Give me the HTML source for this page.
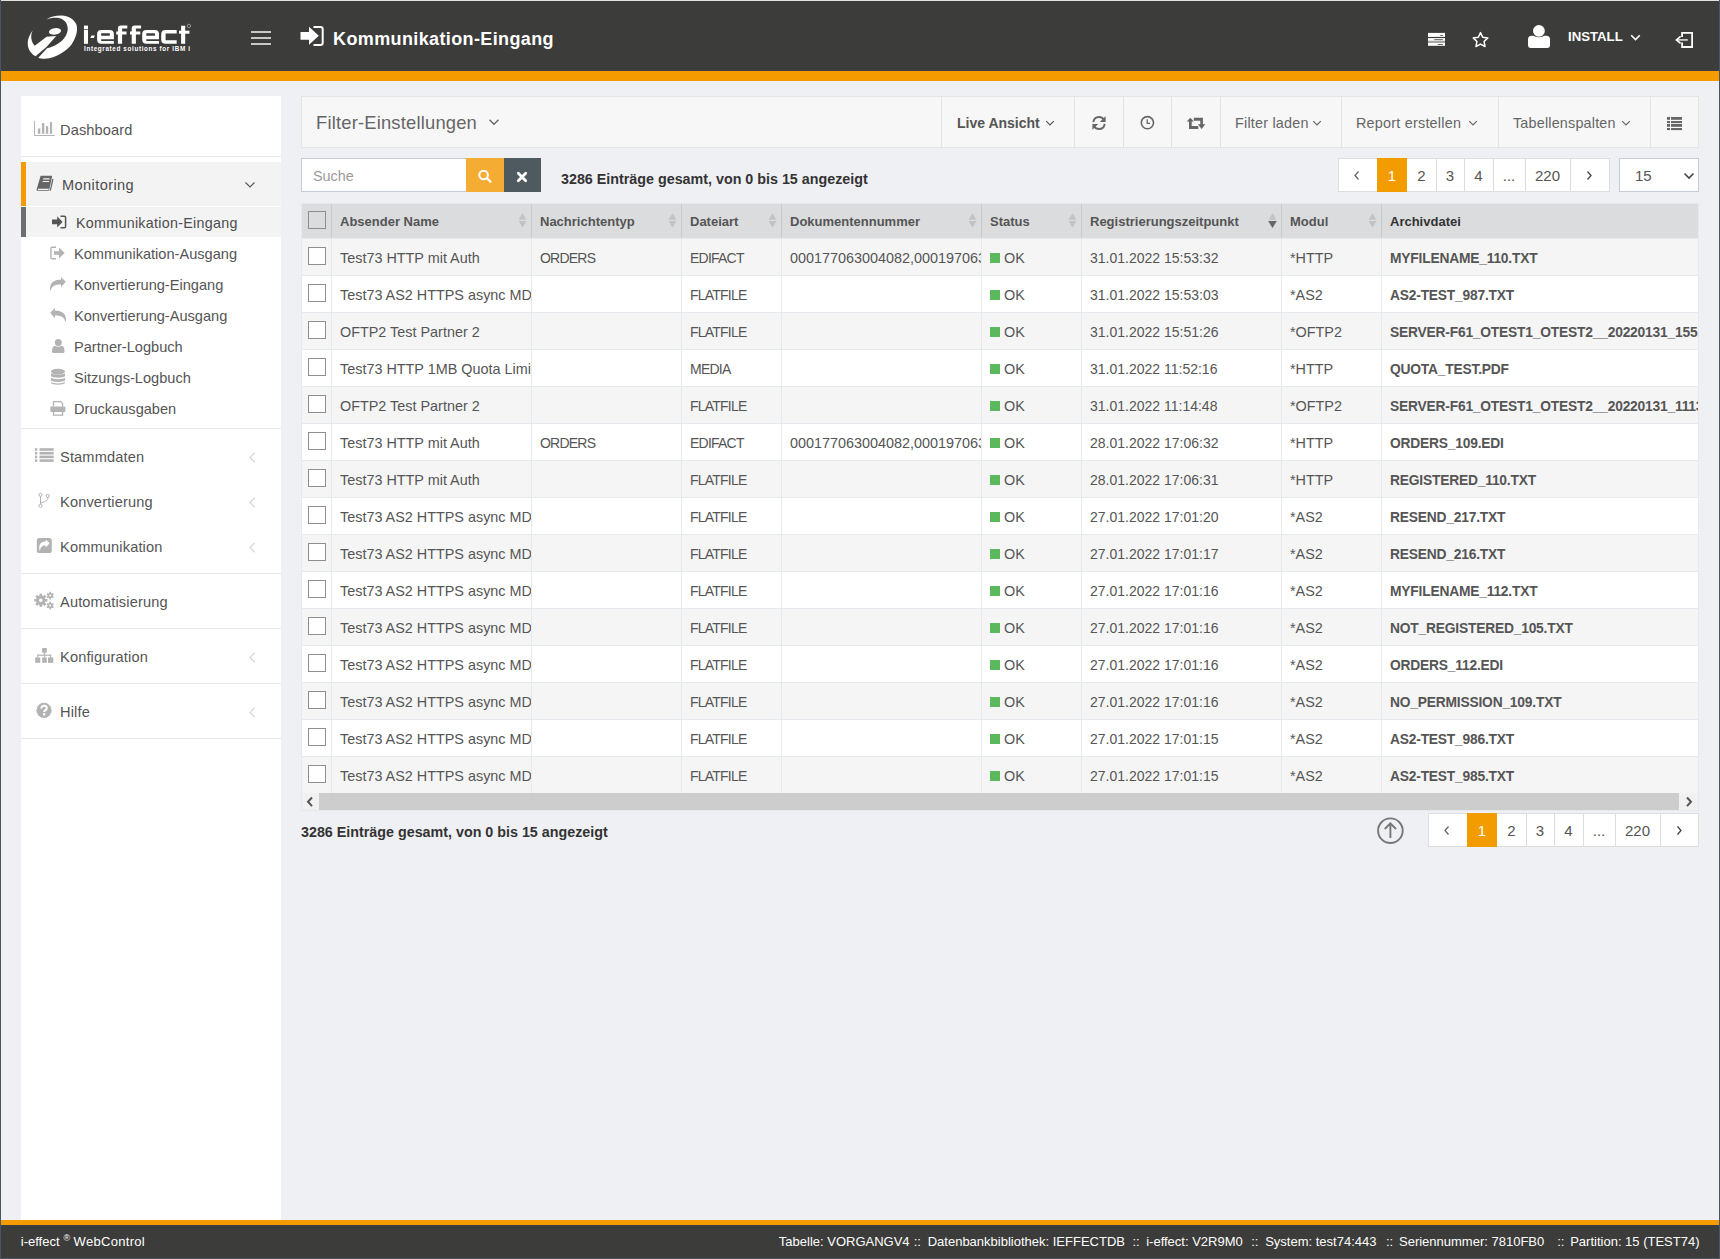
<!DOCTYPE html>
<html><head><meta charset="utf-8">
<style>
*{box-sizing:border-box;margin:0;padding:0}
html,body{width:1720px;height:1259px;overflow:hidden}
body{position:relative;background:#eff0f4;font-family:"Liberation Sans",sans-serif;color:#555;font-size:14px}
.abs{position:absolute}
.sl{line-height:18px;white-space:nowrap;color:#555}
.cb{width:18px;height:18px;border:1px solid #8e8e8e}
.th{font-weight:700;font-size:13px;line-height:18px;white-space:nowrap}
.td{font-size:14.4px;line-height:18px;white-space:nowrap;overflow:hidden;color:#555}
.td.b{font-weight:700;font-size:13.8px;letter-spacing:-0.2px;padding-top:0.8px}
.td.up{font-size:14px;letter-spacing:-0.78px;padding-top:0.3px}
.td.dt{font-size:14px}
.pg{font-size:15px;line-height:18px;text-align:center;white-space:nowrap}
.ft{top:1233px;font-size:13px;line-height:18px;color:#fff;white-space:nowrap}
#frameT{left:0;top:0;width:1720px;height:1px;background:#e2e2e2}
#frameL{left:0;top:0;width:1px;height:1259px;background:#4a5564}
#frameR{left:1719px;top:0;width:1px;height:1259px;background:#4a5564}
#frameB{left:0;top:1258px;width:1720px;height:1px;background:#4a5564}
#hdr{left:1px;top:1px;width:1718px;height:70px;background:#3c3c3b}
#hbar{left:1px;top:71px;width:1718px;height:10px;background:#f49b00}
#side{left:21px;top:96px;width:260px;height:1124px;background:#fff}
#fbar{left:1px;top:1220px;width:1718px;height:5px;background:#f49b00}
#foot{left:1px;top:1225px;width:1718px;height:33px;background:#3c3c3b;color:#fff;font-size:13px}
</style></head><body>
<div class="abs" id="hdr"></div>
<div class="abs" id="hbar"></div>
<svg class="abs" style="left:24px;top:12px" width="60" height="50" viewBox="0 0 60 50">
<path fill="#fff" d="M22.2,7.5 C26,5 31,3.7 37.7,3.6 C44,3.8 50,7 52.6,13 C54,19 52,26 47.5,32.5 C43,38.5 35,43.5 26.5,46 C22,47 17,46.8 14.3,45.7 L23,36.3 C28,35 33,33 37,29.5 C41,26 43.6,21.5 43.7,17 C43.8,12 41,8 36,6.3 C31.5,5.2 26.5,6 22.2,7.5 Z"/>
<path fill="#fff" d="M12.7,14.1 C8.5,18 5,23.5 3.9,29 C3.2,34.5 4.5,40 11.5,44.3 L22.2,35.3 L32.2,24 L22.6,24.8 L10.7,33.8 C8,31 6.8,27 7.3,22.8 C7.8,19.5 9.7,16.5 12.7,14.1 Z"/>
<ellipse cx="31" cy="19.4" rx="6.1" ry="3.2" transform="rotate(-9 31 19.4)" fill="#fff"/>
</svg>
<svg class="abs" style="left:80px;top:20px" width="115" height="26" viewBox="0 0 115 26"><g fill="#fff"><rect x="3.95" y="5.6" width="4.05" height="3.7"/><rect x="3.95" y="10" width="4.05" height="13.8"/><path d="M10.3,18 L11.5,15.4 H14.9 L13.7,18 Z"/><path fill-rule="evenodd" d="M21.3,9.9 H29.7 Q33.9,9.9 33.9,14.1 V19.3 H21.2 V21.1 H33.9 V23.8 H21.3 Q17.1,23.8 17.1,19.6 V14.1 Q17.1,9.9 21.3,9.9 Z M21.2,13.3 H29.8 V15.7 H21.2 Z"/><path d="M37.9,23.8 V8.6 Q37.9,5.6 40.9,5.6 H47.3 V8.6 H42.1 V11.6 H46.5 V14.4 H42.1 V23.8 Z M36.2,11.6 H37.95 V14.4 H36.2 Z"/><path d="M51.7,23.8 V8.6 Q51.7,5.6 54.7,5.6 H61.099999999999994 V8.6 H55.900000000000006 V11.6 H60.3 V14.4 H55.900000000000006 V23.8 Z M50.0,11.6 H51.75 V14.4 H50.0 Z"/><path fill-rule="evenodd" d="M66.4,9.9 H74.8 Q79.0,9.9 79.0,14.1 V19.3 H66.3 V21.1 H79.0 V23.8 H66.4 Q62.2,23.8 62.2,19.6 V14.1 Q62.2,9.9 66.4,9.9 Z M66.3,13.3 H74.9 V15.7 H66.3 Z"/><path d="M85.6,9.9 H96.7 V13.4 H85.6 V20.3 H96.7 V23.8 H85.6 Q81.2,23.8 81.2,19.4 V14.3 Q81.2,9.9 85.6,9.9 Z"/><rect x="101.1" y="5.7" width="4.1" height="18.1"/><rect x="99" y="10.7" width="10.4" height="3"/></g><circle cx="108.9" cy="5.9" r="1.7" fill="none" stroke="#bbb" stroke-width="0.7"/></svg>

<div class="abs" style="left:84px;top:45px;font-weight:700;font-size:6.3px;line-height:7px;letter-spacing:0.65px;color:#fff;white-space:nowrap">Integrated solutions for IBM i</div>
<div class="abs" style="left:251px;top:31px;width:20px;height:2px;background:#c8c8c8"></div>
<div class="abs" style="left:251px;top:37px;width:20px;height:2px;background:#c8c8c8"></div>
<div class="abs" style="left:251px;top:43px;width:20px;height:2px;background:#c8c8c8"></div>
<svg class="abs" style="left:300px;top:25px" width="26" height="22" viewBox="0 0 26 22">
<path fill="#fff" d="M0.5,7 H9 V1.8 L18.8,10.8 L9,19.8 V14.7 H0.5 Z"/>
<path fill="none" stroke="#fff" stroke-width="2" d="M13.5,2 H20.5 Q22.7,2 22.7,4.2 V17.8 Q22.7,20 20.5,20 H13.5"/>
</svg>
<div class="abs" style="left:333px;top:27px;font-weight:700;font-size:18px;line-height:24px;letter-spacing:0.38px;color:#fff;white-space:nowrap">Kommunikation-Eingang</div>
<svg class="abs" style="left:1427px;top:32px" width="20" height="16" viewBox="0 0 20 16">
<rect x="1" y="0.9" width="17" height="4" fill="#fff"/>
<rect x="1" y="6.1" width="17" height="2.8" fill="#fff"/>
<rect x="1" y="8.9" width="17" height="2" fill="#a6a6a6"/>
<rect x="1" y="10.9" width="17" height="2.9" fill="#fff"/>
<g fill="#555"><rect x="13.3" y="3" width="2.6" height="0.9"/><rect x="7.3" y="7.2" width="8.6" height="0.9"/><rect x="10.8" y="12.1" width="5.1" height="0.9"/></g>
</svg>
<svg class="abs" style="left:1471px;top:30px" width="19" height="20" viewBox="0 0 19 20"><path fill="none" stroke="#fff" stroke-width="1.5" stroke-linejoin="round" d="M9.50,2.60 L11.70,7.27 L16.82,7.92 L13.07,11.46 L14.03,16.53 L9.50,14.05 L4.97,16.53 L5.93,11.46 L2.18,7.92 L7.30,7.27 Z"/></svg>
<svg class="abs" style="left:1527px;top:24px" width="25" height="26" viewBox="0 0 25 26">
<circle cx="11.9" cy="6.9" r="5.9" fill="#fff"/>
<path fill="#fff" d="M1,15.4 Q1,11.7 4.7,11.7 H6.6 C8.5,13.6 15.3,13.6 17.2,11.7 H19.3 Q23,11.7 23,15.4 V21.6 Q23,24 20.6,24 H3.4 Q1,24 1,21.6 Z"/>
</svg>
<div class="abs" style="left:1568px;top:28px;font-weight:700;font-size:13.2px;line-height:18px;color:#fff;white-space:nowrap">INSTALL</div>
<svg class="abs" style="left:1629px;top:33px" width="13" height="9" viewBox="0 0 13 9">
<path fill="none" stroke="#fff" stroke-width="1.6" d="M2.2,2.2 L6.5,6.6 L10.8,2.2"/>
</svg>
<svg class="abs" style="left:1674px;top:30px" width="22" height="20" viewBox="0 0 22 20">
<path fill="none" stroke="#fff" stroke-width="1.8" d="M8.1,6.9 V2.9 H18.1 V17 H8.1 V12.6"/>
<path fill="none" stroke="#d2d2d2" stroke-width="1.7" d="M3.2,9.9 H13.8"/>
<path fill="none" stroke="#fff" stroke-width="1.6" d="M6.6,6.4 L2.4,9.9 L6.6,13.4"/>
</svg>

<div class="abs" id="side"></div>
<!-- sidebar -->
<svg class="abs" style="left:33px;top:120px" width="22" height="17" viewBox="0 0 22 17">
<path fill="none" stroke="#b5b5b5" stroke-width="1" d="M1.5,0.8 V15.5 H21.8"/>
<g fill="#b3b3b3"><rect x="4.9" y="8.5" width="2.4" height="5.3"/><rect x="8.9" y="3.1" width="2.4" height="10.7"/><rect x="12.9" y="6.1" width="2.3" height="7.7"/><rect x="16.9" y="2.1" width="2.2" height="11.7"/></g>
</svg>
<div class="abs sl" style="left:60px;top:121px;font-size:14.6px;letter-spacing:0.13px">Dashboard</div>
<div class="abs" style="left:21px;top:156px;width:260px;height:1px;background:#e6e6e6"></div>
<div class="abs" style="left:21px;top:162px;width:260px;height:44px;background:#f3f3f3;border-left:5px solid #f49b00"></div>
<svg class="abs" style="left:35px;top:174px" width="20" height="18" viewBox="0 0 20 18">
<path fill="#666" d="M5.6,1.8 H16.5 Q17.3,1.8 17.1,2.6 L14.2,15.9 Q14,16.8 13.1,16.8 H2.7 Q1.3,16.8 1.6,15.4 Z"/>
<path fill="none" stroke="#f3f3f3" stroke-width="1.1" d="M8.2,4.9 H14.6 M7.7,7.5 H14.1 M2.9,15.4 H13.6"/>
<path fill="none" stroke="#666" stroke-width="1.2" d="M17.9,5 L15.3,16.6"/>
</svg>
<div class="abs sl" style="left:62px;top:176px;font-size:14.6px;letter-spacing:0.4px;color:#4d4d4d">Monitoring</div>
<svg class="abs" style="left:244px;top:181px" width="12" height="8" viewBox="0 0 12 8">
<path fill="none" stroke="#555" stroke-width="1.1" d="M1.5,1.5 L6,6 L10.5,1.5"/>
</svg>
<div class="abs" style="left:21px;top:207px;width:260px;height:30px;background:#f3f3f3;border-left:5px solid #6e6e6e"></div>
<svg class="abs" style="left:51px;top:215px" width="16" height="14" viewBox="0 0 16 14">
<path fill="#555" d="M1,4.6 H6.2 V1.3 L11.6,6.9 L6.2,12.5 V9.2 H1 Z"/>
<path fill="none" stroke="#555" stroke-width="1.5" d="M9.5,1.2 H13.2 Q14.6,1.2 14.6,2.6 V11.4 Q14.6,12.8 13.2,12.8 H9.5"/>
</svg>
<div class="abs sl" style="left:76px;top:214px;font-size:14.3px;letter-spacing:0.28px;color:#4d4d4d">Kommunikation-Eingang</div>
<svg class="abs" style="left:50px;top:246px" width="16" height="14" viewBox="0 0 16 14">
<path fill="none" stroke="#b3b3b3" stroke-width="1.4" d="M6,1.2 H2.2 Q0.9,1.2 0.9,2.5 V11.5 Q0.9,12.8 2.2,12.8 H6"/>
<path fill="#b3b3b3" d="M4,5.3 H9 V1.5 L14.7,7 L9,12.5 V8.8 H4 Z"/>
</svg>
<div class="abs sl" style="left:74px;top:245px;font-size:14.6px">Kommunikation-Ausgang</div>
<svg class="abs" style="left:49px;top:276px" width="18" height="16" viewBox="0 0 18 16">
<path fill="#b3b3b3" d="M16.8,5.8 L12,1 V3.8 C6,3.8 1.5,5.5 1,12 C1,13.5 1.3,14.5 1.8,15.2 C2.3,11 4.5,8.6 12,8.6 V11.2 Z"/>
</svg>
<div class="abs sl" style="left:74px;top:276px;font-size:14.6px">Konvertierung-Eingang</div>
<svg class="abs" style="left:49px;top:307px" width="18" height="16" viewBox="0 0 18 16">
<path fill="#b3b3b3" d="M1.2,5.8 L6,1 V3.8 C12,3.8 16.5,5.5 17,12 C17,13.5 16.7,14.5 16.2,15.2 C15.7,11 13.5,8.6 6,8.6 V11.2 Z"/>
</svg>
<div class="abs sl" style="left:74px;top:307px;font-size:14.6px">Konvertierung-Ausgang</div>
<svg class="abs" style="left:51px;top:338px" width="15" height="16" viewBox="0 0 15 16">
<circle cx="7.3" cy="4.5" r="3.5" fill="#b3b3b3"/>
<path fill="#b3b3b3" d="M1,13.5 C1,10 2,8 4,7.8 C5.5,9 9,9 10.5,7.8 C12.5,8 13.5,10 13.5,13.5 Q13.5,15 12,15 H2.5 Q1,15 1,13.5 Z"/>
</svg>
<div class="abs sl" style="left:74px;top:338px;font-size:14.6px">Partner-Logbuch</div>
<svg class="abs" style="left:50px;top:368px" width="16" height="18" viewBox="0 0 16 18">
<ellipse cx="8" cy="3.6" rx="7" ry="2.9" fill="#b3b3b3"/>
<path fill="#b3b3b3" d="M1,5.2 C2,7 14,7 15,5.2 V8.3 C14,10.2 2,10.2 1,8.3 Z"/>
<path fill="#b3b3b3" d="M1,9.7 C2,11.6 14,11.6 15,9.7 V12.6 C14,14.5 2,14.5 1,12.6 Z"/>
<path fill="#b3b3b3" d="M1,14 C2,15.9 14,15.9 15,14 V15 C14,17.2 2,17.2 1,15 Z"/>
</svg>
<div class="abs sl" style="left:74px;top:369px;font-size:14.6px">Sitzungs-Logbuch</div>
<svg class="abs" style="left:49px;top:400px" width="18" height="17" viewBox="0 0 18 17">
<path fill="none" stroke="#b3b3b3" stroke-width="1.3" d="M4.5,6.5 V1.6 H11.6 L13.6,3.6 V6.5"/>
<rect x="1.4" y="6.5" width="15" height="5.5" rx="1" fill="#b3b3b3"/>
<path fill="none" stroke="#b3b3b3" stroke-width="1.3" d="M4.5,11 V15.2 H13.6 V11"/>
</svg>
<div class="abs sl" style="left:74px;top:400px;font-size:14.6px">Druckausgaben</div>
<div class="abs" style="left:21px;top:428px;width:260px;height:1px;background:#e6e6e6"></div>

<svg class="abs" style="left:34px;top:447px" width="21" height="16" viewBox="0 0 21 16">
<g fill="#b3b3b3">
<rect x="1" y="1.2" width="2.2" height="2.6"/><rect x="5.5" y="1.2" width="14.2" height="2.6"/>
<rect x="1" y="4.9" width="2.2" height="2.6"/><rect x="5.5" y="4.9" width="14.2" height="2.6"/>
<rect x="1" y="8.6" width="2.2" height="2.6"/><rect x="5.5" y="8.6" width="14.2" height="2.6"/>
<rect x="1" y="12.3" width="2.2" height="2.6"/><rect x="5.5" y="12.3" width="14.2" height="2.6"/>
</g></svg>
<div class="abs sl" style="left:60px;top:448px;font-size:14.6px;letter-spacing:0.15px">Stammdaten</div>
<svg class="abs" style="left:247px;top:451px" width="10" height="13" viewBox="0 0 10 13"><path fill="none" stroke="#d7d7dd" stroke-width="1.2" d="M7.8,1.8 L3,6.5 L7.8,11.2"/></svg>

<svg class="abs" style="left:37px;top:492px" width="14" height="17" viewBox="0 0 14 17">
<g fill="none" stroke="#b3b3b3" stroke-width="1">
<circle cx="3.5" cy="2.8" r="1.6"/><circle cx="3.5" cy="13.8" r="1.6"/><circle cx="10.8" cy="4" r="1.6"/>
<path d="M3.5,4.4 V12.2 M10.8,5.6 C10.8,9 8,9.5 3.6,11.2"/>
</g></svg>
<div class="abs sl" style="left:60px;top:493px;font-size:14.6px;letter-spacing:0.15px">Konvertierung</div>
<svg class="abs" style="left:247px;top:496px" width="10" height="13" viewBox="0 0 10 13"><path fill="none" stroke="#d7d7dd" stroke-width="1.2" d="M7.8,1.8 L3,6.5 L7.8,11.2"/></svg>

<svg class="abs" style="left:36px;top:537px" width="17" height="17" viewBox="0 0 17 17">
<rect x="0.8" y="1" width="15" height="15" rx="2.6" fill="#b3b3b3"/>
<path fill="#fff" d="M13.6,6.2 L9.8,2.6 V4.6 C5.5,4.6 3.2,6.8 3.2,10.8 C3.2,12.4 3.6,13.6 4,14.2 C4.2,10.6 6,8.6 9.8,8.6 V10.4 Z"/>
</svg>
<div class="abs sl" style="left:60px;top:538px;font-size:14.6px;letter-spacing:0.15px">Kommunikation</div>
<svg class="abs" style="left:247px;top:541px" width="10" height="13" viewBox="0 0 10 13"><path fill="none" stroke="#d7d7dd" stroke-width="1.2" d="M7.8,1.8 L3,6.5 L7.8,11.2"/></svg>
<div class="abs" style="left:21px;top:573px;width:260px;height:1px;background:#e6e6e6"></div>

<svg class="abs" style="left:33px;top:591px" width="22" height="19" viewBox="0 0 22 19">
<g fill="#b3b3b3">
<circle cx="7.8" cy="9.3" r="4.8"/>
<g transform="translate(7.8 9.3)">
<rect x="-1.3" y="-6.6" width="2.6" height="13.2"/><rect x="-1.3" y="-6.6" width="2.6" height="13.2" transform="rotate(45)"/>
<rect x="-1.3" y="-6.6" width="2.6" height="13.2" transform="rotate(90)"/><rect x="-1.3" y="-6.6" width="2.6" height="13.2" transform="rotate(135)"/>
</g>
<g transform="translate(17.2 4.6)">
<circle r="2.6"/><rect x="-0.8" y="-3.8" width="1.6" height="7.6"/><rect x="-0.8" y="-3.8" width="1.6" height="7.6" transform="rotate(60)"/><rect x="-0.8" y="-3.8" width="1.6" height="7.6" transform="rotate(120)"/>
</g>
<g transform="translate(17.2 14.6)">
<circle r="2.6"/><rect x="-0.8" y="-3.8" width="1.6" height="7.6"/><rect x="-0.8" y="-3.8" width="1.6" height="7.6" transform="rotate(60)"/><rect x="-0.8" y="-3.8" width="1.6" height="7.6" transform="rotate(120)"/>
</g>
</g>
<circle cx="7.8" cy="9.3" r="1.8" fill="#fff"/><circle cx="17.2" cy="4.6" r="1" fill="#fff"/><circle cx="17.2" cy="14.6" r="1" fill="#fff"/>
</svg>
<div class="abs sl" style="left:60px;top:593px;font-size:14.6px;letter-spacing:0.15px">Automatisierung</div>
<div class="abs" style="left:21px;top:628px;width:260px;height:1px;background:#e6e6e6"></div>

<svg class="abs" style="left:34px;top:647px" width="21" height="17" viewBox="0 0 21 17">
<g fill="#b3b3b3">
<rect x="8.2" y="1" width="4.6" height="4.8"/>
<rect x="1.2" y="10.4" width="5" height="5.4"/><rect x="8.2" y="10.4" width="4.6" height="5.4"/><rect x="14" y="10.4" width="5.3" height="5.4"/>
<rect x="9.9" y="5.8" width="1.2" height="4.6"/><rect x="3.2" y="7.6" width="14" height="1.2"/>
<rect x="3.2" y="7.6" width="1.2" height="2.8"/><rect x="16" y="7.6" width="1.2" height="2.8"/>
</g></svg>
<div class="abs sl" style="left:60px;top:648px;font-size:14.6px;letter-spacing:0.15px">Konfiguration</div>
<svg class="abs" style="left:247px;top:651px" width="10" height="13" viewBox="0 0 10 13"><path fill="none" stroke="#d7d7dd" stroke-width="1.2" d="M7.8,1.8 L3,6.5 L7.8,11.2"/></svg>
<div class="abs" style="left:21px;top:683px;width:260px;height:1px;background:#e6e6e6"></div>

<svg class="abs" style="left:35px;top:702px" width="18" height="17" viewBox="0 0 18 17">
<circle cx="9" cy="8.3" r="7.6" fill="#b3b3b3"/>
<path fill="none" stroke="#fff" stroke-width="2" d="M6.3,6.4 C6.3,4.6 7.5,3.8 9,3.8 C10.6,3.8 11.8,4.7 11.8,6.2 C11.8,8 9.2,8.3 9.2,10"/>
<rect x="8" y="11.2" width="2.3" height="2.2" fill="#fff"/>
</svg>
<div class="abs sl" style="left:60px;top:703px;font-size:14.6px;letter-spacing:0.15px">Hilfe</div>
<svg class="abs" style="left:247px;top:706px" width="10" height="13" viewBox="0 0 10 13"><path fill="none" stroke="#d7d7dd" stroke-width="1.2" d="M7.8,1.8 L3,6.5 L7.8,11.2"/></svg>
<div class="abs" style="left:21px;top:738px;width:260px;height:1px;background:#e6e6e6"></div>


<!-- filter bar -->
<div class="abs" style="left:301px;top:96px;width:1398px;height:52px;background:#f7f7f7;border:1px solid #e4e4e4"></div>
<div class="abs" style="left:316px;top:111px;font-size:18.4px;letter-spacing:0.18px;line-height:24px;color:#666;white-space:nowrap">Filter-Einstellungen</div>
<svg class="abs" style="left:488px;top:118px" width="12" height="9" viewBox="0 0 12 9"><path fill="none" stroke="#666" stroke-width="1.4" d="M1.5,1.8 L6,6.3 L10.5,1.8"/></svg>
<div class="abs" style="left:941px;top:97px;width:1px;height:50px;background:#e2e2e2"></div><div class="abs" style="left:1074px;top:97px;width:1px;height:50px;background:#e2e2e2"></div><div class="abs" style="left:1123px;top:97px;width:1px;height:50px;background:#e2e2e2"></div><div class="abs" style="left:1171px;top:97px;width:1px;height:50px;background:#e2e2e2"></div><div class="abs" style="left:1220px;top:97px;width:1px;height:50px;background:#e2e2e2"></div><div class="abs" style="left:1341px;top:97px;width:1px;height:50px;background:#e2e2e2"></div><div class="abs" style="left:1498px;top:97px;width:1px;height:50px;background:#e2e2e2"></div><div class="abs" style="left:1650px;top:97px;width:1px;height:50px;background:#e2e2e2"></div>
<div class="abs" style="left:957px;top:114px;font-weight:700;font-size:14px;line-height:18px;color:#555;white-space:nowrap">Live Ansicht</div>
<svg class="abs" style="left:1045px;top:120px" width="10" height="7" viewBox="0 0 10 7"><path fill="none" stroke="#555" stroke-width="1.2" d="M1.2,1.2 L5,5 L8.8,1.2"/></svg>
<svg class="abs" style="left:1091px;top:115px" width="16" height="16" viewBox="0 0 16 16">
<path fill="none" stroke="#666" stroke-width="1.9" d="M2.3,7.2 C2.8,4 5.2,2 8,2 C10.2,2 11.8,3 12.9,4.6"/>
<path fill="#666" d="M14.6,1.3 V7.1 H8.8 Z"/>
<path fill="none" stroke="#666" stroke-width="1.9" d="M13.7,8.8 C13.2,12 10.8,14 8,14 C5.8,14 4.2,13 3.1,11.4"/>
<path fill="#666" d="M1.4,14.7 V8.9 H7.2 Z"/>
</svg>
<svg class="abs" style="left:1139px;top:115px" width="17" height="16" viewBox="0 0 17 16">
<circle cx="8.4" cy="7.7" r="6.1" fill="none" stroke="#666" stroke-width="1.6"/>
<path fill="none" stroke="#666" stroke-width="1.3" d="M8.2,4.2 V8.3 H11"/>
</svg>
<svg class="abs" style="left:1186px;top:117px" width="21" height="13" viewBox="0 0 21 13"><g fill="#666">
<path d="M0.7,4.4 L4.3,0.8 L7.9,4.4 H5.7 V8.9 H12.3 V11.9 H3 V4.4 Z"/>
<path d="M19.3,7.3 L15.6,11.9 L11.9,7.3 H14.3 V3.7 H7.8 V0.8 H16.9 V7.3 Z"/>
</g></svg>
<div class="abs" style="left:1235px;top:114px;font-size:14.4px;letter-spacing:0.2px;line-height:18px;color:#666;white-space:nowrap">Filter laden</div>
<svg class="abs" style="left:1312px;top:120px" width="10" height="7" viewBox="0 0 10 7"><path fill="none" stroke="#666" stroke-width="1.2" d="M1.2,1.2 L5,5 L8.8,1.2"/></svg>
<div class="abs" style="left:1356px;top:114px;font-size:14.4px;letter-spacing:0.22px;line-height:18px;color:#666;white-space:nowrap">Report erstellen</div>
<svg class="abs" style="left:1468px;top:120px" width="10" height="7" viewBox="0 0 10 7"><path fill="none" stroke="#666" stroke-width="1.2" d="M1.2,1.2 L5,5 L8.8,1.2"/></svg>
<div class="abs" style="left:1513px;top:114px;font-size:14.4px;letter-spacing:0.18px;line-height:18px;color:#666;white-space:nowrap">Tabellenspalten</div>
<svg class="abs" style="left:1621px;top:120px" width="10" height="7" viewBox="0 0 10 7"><path fill="none" stroke="#666" stroke-width="1.2" d="M1.2,1.2 L5,5 L8.8,1.2"/></svg>
<svg class="abs" style="left:1666px;top:116px" width="17" height="15" viewBox="0 0 17 15">
<g fill="#666">
<rect x="1" y="1" width="3" height="2.8"/><rect x="5" y="1" width="11" height="2.8"/>
<rect x="1" y="5" width="3" height="2.1"/><rect x="5" y="5" width="11" height="2.1"/>
<rect x="1" y="8" width="3" height="2.8"/><rect x="5" y="8" width="11" height="2.8"/>
<rect x="1" y="12" width="3" height="2.1"/><rect x="5" y="12" width="11" height="2.1"/>
</g></svg>

<!-- search row -->
<div class="abs" style="left:301px;top:158px;width:166px;height:34px;background:#fff;border:1px solid #c6ccd8"></div>
<div class="abs" style="left:313px;top:167px;font-size:14.4px;line-height:18px;color:#9a9a9a;white-space:nowrap">Suche</div>
<div class="abs" style="left:466px;top:158px;width:38px;height:34px;background:#f5ac33"></div>
<svg class="abs" style="left:477px;top:168px" width="16" height="16" viewBox="0 0 16 16">
<circle cx="6.6" cy="7" r="4.3" fill="none" stroke="#fff" stroke-width="2"/>
<path stroke="#fff" stroke-width="2.3" stroke-linecap="round" d="M10,10.4 L13.4,13.6"/>
</svg>
<div class="abs" style="left:504px;top:158px;width:37px;height:34px;background:#4f5a60"></div>
<svg class="abs" style="left:515px;top:170px" width="14" height="14" viewBox="0 0 14 14">
<path stroke="#fff" stroke-width="2.8" stroke-linecap="round" d="M3.3,3.3 L10.7,10.7 M10.7,3.3 L3.3,10.7"/>
</svg>
<div class="abs" style="left:561px;top:170px;font-weight:700;font-size:14.3px;line-height:18px;color:#333;white-space:nowrap">3286 Einträge gesamt, von 0 bis 15 angezeigt</div>

<!-- table -->
<div class="abs" style="left:301px;top:203px;width:1398px;height:608px;border:1px solid #e6e9ee;background:#fff"></div>
<div class="abs" style="left:302px;top:204px;width:1396px;height:34px;background:#dbdcde"></div>
<div class="abs" style="left:302px;top:238px;width:1396px;height:1px;background:#e6e9ee"></div>
<div class="abs" style="left:331px;top:204px;width:1px;height:34px;background:#c9cacc"></div>
<div class="abs" style="left:531px;top:204px;width:1px;height:34px;background:#c9cacc"></div>
<div class="abs" style="left:681px;top:204px;width:1px;height:34px;background:#c9cacc"></div>
<div class="abs" style="left:781px;top:204px;width:1px;height:34px;background:#c9cacc"></div>
<div class="abs" style="left:981px;top:204px;width:1px;height:34px;background:#c9cacc"></div>
<div class="abs" style="left:1081px;top:204px;width:1px;height:34px;background:#c9cacc"></div>
<div class="abs" style="left:1281px;top:204px;width:1px;height:34px;background:#c9cacc"></div>
<div class="abs" style="left:1381px;top:204px;width:1px;height:34px;background:#c9cacc"></div>
<div class="abs cb" style="left:308px;top:211px;background:#dbdcde"></div>
<div class="abs th" style="left:340px;top:213px;color:#555">Absender Name</div>
<svg class="abs" style="left:517px;top:212px" width="10" height="17" viewBox="0 0 10 17"><path fill="#c3c3c3" d="M5.5,1 L9.3,7.7 H1.7 Z M1.7,9 H9.3 L5.5,15.7 Z"/></svg>
<div class="abs th" style="left:540px;top:213px;color:#555">Nachrichtentyp</div>
<svg class="abs" style="left:667px;top:212px" width="10" height="17" viewBox="0 0 10 17"><path fill="#c3c3c3" d="M5.5,1 L9.3,7.7 H1.7 Z M1.7,9 H9.3 L5.5,15.7 Z"/></svg>
<div class="abs th" style="left:690px;top:213px;color:#555">Dateiart</div>
<svg class="abs" style="left:767px;top:212px" width="10" height="17" viewBox="0 0 10 17"><path fill="#c3c3c3" d="M5.5,1 L9.3,7.7 H1.7 Z M1.7,9 H9.3 L5.5,15.7 Z"/></svg>
<div class="abs th" style="left:790px;top:213px;color:#555">Dokumentennummer</div>
<svg class="abs" style="left:967px;top:212px" width="10" height="17" viewBox="0 0 10 17"><path fill="#c3c3c3" d="M5.5,1 L9.3,7.7 H1.7 Z M1.7,9 H9.3 L5.5,15.7 Z"/></svg>
<div class="abs th" style="left:990px;top:213px;color:#555">Status</div>
<svg class="abs" style="left:1067px;top:212px" width="10" height="17" viewBox="0 0 10 17"><path fill="#c3c3c3" d="M5.5,1 L9.3,7.7 H1.7 Z M1.7,9 H9.3 L5.5,15.7 Z"/></svg>
<div class="abs th" style="left:1090px;top:213px;color:#555">Registrierungszeitpunkt</div>
<svg class="abs" style="left:1267px;top:212px" width="10" height="17" viewBox="0 0 10 17"><path fill="#c3c3c3" d="M5.5,1 L9.3,7.7 H1.7 Z"/><path fill="#666" d="M1.2,9 H9.8 L5.5,16 Z"/></svg>
<div class="abs th" style="left:1290px;top:213px;color:#555">Modul</div>
<svg class="abs" style="left:1367px;top:212px" width="10" height="17" viewBox="0 0 10 17"><path fill="#c3c3c3" d="M5.5,1 L9.3,7.7 H1.7 Z M1.7,9 H9.3 L5.5,15.7 Z"/></svg>
<div class="abs th" style="left:1390px;top:213px;color:#333">Archivdatei</div>
<div class="abs" style="left:302px;top:239px;width:1396px;height:36px;background:#f5f5f5"></div>
<div class="abs" style="left:302px;top:275px;width:1396px;height:1px;background:#e6e9ee"></div>
<div class="abs cb" style="left:308px;top:247px;background:#fff"></div>
<div class="abs td" style="left:340px;top:249px;width:191px">Test73 HTTP mit Auth</div>
<div class="abs td up" style="left:540px;top:249px;width:141px">ORDERS</div>
<div class="abs td up" style="left:690px;top:249px;width:91px">EDIFACT</div>
<div class="abs td" style="left:790px;top:249px;width:191px">000177063004082,000197063004082</div>
<div class="abs" style="left:990px;top:253px;width:10px;height:10px;background:#5cb85c"></div>
<div class="abs td" style="left:1004px;top:249px">OK</div>
<div class="abs td dt" style="left:1090px;top:249px;width:191px">31.01.2022 15:53:32</div>
<div class="abs td" style="left:1290px;top:249px;width:91px">*HTTP</div>
<div class="abs td b" style="left:1390px;top:249px;width:308px">MYFILENAME_110.TXT</div>
<div class="abs" style="left:302px;top:276px;width:1396px;height:36px;background:#fff"></div>
<div class="abs" style="left:302px;top:312px;width:1396px;height:1px;background:#e6e9ee"></div>
<div class="abs cb" style="left:308px;top:284px;background:#fff"></div>
<div class="abs td" style="left:340px;top:286px;width:191px">Test73 AS2 HTTPS async MDN</div>
<div class="abs td up" style="left:690px;top:286px;width:91px">FLATFILE</div>
<div class="abs" style="left:990px;top:290px;width:10px;height:10px;background:#5cb85c"></div>
<div class="abs td" style="left:1004px;top:286px">OK</div>
<div class="abs td dt" style="left:1090px;top:286px;width:191px">31.01.2022 15:53:03</div>
<div class="abs td" style="left:1290px;top:286px;width:91px">*AS2</div>
<div class="abs td b" style="left:1390px;top:286px;width:308px">AS2-TEST_987.TXT</div>
<div class="abs" style="left:302px;top:313px;width:1396px;height:36px;background:#f5f5f5"></div>
<div class="abs" style="left:302px;top:349px;width:1396px;height:1px;background:#e6e9ee"></div>
<div class="abs cb" style="left:308px;top:321px;background:#fff"></div>
<div class="abs td" style="left:340px;top:323px;width:191px">OFTP2 Test Partner 2</div>
<div class="abs td up" style="left:690px;top:323px;width:91px">FLATFILE</div>
<div class="abs" style="left:990px;top:327px;width:10px;height:10px;background:#5cb85c"></div>
<div class="abs td" style="left:1004px;top:323px">OK</div>
<div class="abs td dt" style="left:1090px;top:323px;width:191px">31.01.2022 15:51:26</div>
<div class="abs td" style="left:1290px;top:323px;width:91px">*OFTP2</div>
<div class="abs td b" style="left:1390px;top:323px;width:308px">SERVER-F61_OTEST1_OTEST2__20220131_155102</div>
<div class="abs" style="left:302px;top:350px;width:1396px;height:36px;background:#fff"></div>
<div class="abs" style="left:302px;top:386px;width:1396px;height:1px;background:#e6e9ee"></div>
<div class="abs cb" style="left:308px;top:358px;background:#fff"></div>
<div class="abs td" style="left:340px;top:360px;width:191px">Test73 HTTP 1MB Quota Limit</div>
<div class="abs td up" style="left:690px;top:360px;width:91px">MEDIA</div>
<div class="abs" style="left:990px;top:364px;width:10px;height:10px;background:#5cb85c"></div>
<div class="abs td" style="left:1004px;top:360px">OK</div>
<div class="abs td dt" style="left:1090px;top:360px;width:191px">31.01.2022 11:52:16</div>
<div class="abs td" style="left:1290px;top:360px;width:91px">*HTTP</div>
<div class="abs td b" style="left:1390px;top:360px;width:308px">QUOTA_TEST.PDF</div>
<div class="abs" style="left:302px;top:387px;width:1396px;height:36px;background:#f5f5f5"></div>
<div class="abs" style="left:302px;top:423px;width:1396px;height:1px;background:#e6e9ee"></div>
<div class="abs cb" style="left:308px;top:395px;background:#fff"></div>
<div class="abs td" style="left:340px;top:397px;width:191px">OFTP2 Test Partner 2</div>
<div class="abs td up" style="left:690px;top:397px;width:91px">FLATFILE</div>
<div class="abs" style="left:990px;top:401px;width:10px;height:10px;background:#5cb85c"></div>
<div class="abs td" style="left:1004px;top:397px">OK</div>
<div class="abs td dt" style="left:1090px;top:397px;width:191px">31.01.2022 11:14:48</div>
<div class="abs td" style="left:1290px;top:397px;width:91px">*OFTP2</div>
<div class="abs td b" style="left:1390px;top:397px;width:308px">SERVER-F61_OTEST1_OTEST2__20220131_111355</div>
<div class="abs" style="left:302px;top:424px;width:1396px;height:36px;background:#fff"></div>
<div class="abs" style="left:302px;top:460px;width:1396px;height:1px;background:#e6e9ee"></div>
<div class="abs cb" style="left:308px;top:432px;background:#fff"></div>
<div class="abs td" style="left:340px;top:434px;width:191px">Test73 HTTP mit Auth</div>
<div class="abs td up" style="left:540px;top:434px;width:141px">ORDERS</div>
<div class="abs td up" style="left:690px;top:434px;width:91px">EDIFACT</div>
<div class="abs td" style="left:790px;top:434px;width:191px">000177063004082,000197063004082</div>
<div class="abs" style="left:990px;top:438px;width:10px;height:10px;background:#5cb85c"></div>
<div class="abs td" style="left:1004px;top:434px">OK</div>
<div class="abs td dt" style="left:1090px;top:434px;width:191px">28.01.2022 17:06:32</div>
<div class="abs td" style="left:1290px;top:434px;width:91px">*HTTP</div>
<div class="abs td b" style="left:1390px;top:434px;width:308px">ORDERS_109.EDI</div>
<div class="abs" style="left:302px;top:461px;width:1396px;height:36px;background:#f5f5f5"></div>
<div class="abs" style="left:302px;top:497px;width:1396px;height:1px;background:#e6e9ee"></div>
<div class="abs cb" style="left:308px;top:469px;background:#fff"></div>
<div class="abs td" style="left:340px;top:471px;width:191px">Test73 HTTP mit Auth</div>
<div class="abs td up" style="left:690px;top:471px;width:91px">FLATFILE</div>
<div class="abs" style="left:990px;top:475px;width:10px;height:10px;background:#5cb85c"></div>
<div class="abs td" style="left:1004px;top:471px">OK</div>
<div class="abs td dt" style="left:1090px;top:471px;width:191px">28.01.2022 17:06:31</div>
<div class="abs td" style="left:1290px;top:471px;width:91px">*HTTP</div>
<div class="abs td b" style="left:1390px;top:471px;width:308px">REGISTERED_110.TXT</div>
<div class="abs" style="left:302px;top:498px;width:1396px;height:36px;background:#fff"></div>
<div class="abs" style="left:302px;top:534px;width:1396px;height:1px;background:#e6e9ee"></div>
<div class="abs cb" style="left:308px;top:506px;background:#fff"></div>
<div class="abs td" style="left:340px;top:508px;width:191px">Test73 AS2 HTTPS async MDN</div>
<div class="abs td up" style="left:690px;top:508px;width:91px">FLATFILE</div>
<div class="abs" style="left:990px;top:512px;width:10px;height:10px;background:#5cb85c"></div>
<div class="abs td" style="left:1004px;top:508px">OK</div>
<div class="abs td dt" style="left:1090px;top:508px;width:191px">27.01.2022 17:01:20</div>
<div class="abs td" style="left:1290px;top:508px;width:91px">*AS2</div>
<div class="abs td b" style="left:1390px;top:508px;width:308px">RESEND_217.TXT</div>
<div class="abs" style="left:302px;top:535px;width:1396px;height:36px;background:#f5f5f5"></div>
<div class="abs" style="left:302px;top:571px;width:1396px;height:1px;background:#e6e9ee"></div>
<div class="abs cb" style="left:308px;top:543px;background:#fff"></div>
<div class="abs td" style="left:340px;top:545px;width:191px">Test73 AS2 HTTPS async MDN</div>
<div class="abs td up" style="left:690px;top:545px;width:91px">FLATFILE</div>
<div class="abs" style="left:990px;top:549px;width:10px;height:10px;background:#5cb85c"></div>
<div class="abs td" style="left:1004px;top:545px">OK</div>
<div class="abs td dt" style="left:1090px;top:545px;width:191px">27.01.2022 17:01:17</div>
<div class="abs td" style="left:1290px;top:545px;width:91px">*AS2</div>
<div class="abs td b" style="left:1390px;top:545px;width:308px">RESEND_216.TXT</div>
<div class="abs" style="left:302px;top:572px;width:1396px;height:36px;background:#fff"></div>
<div class="abs" style="left:302px;top:608px;width:1396px;height:1px;background:#e6e9ee"></div>
<div class="abs cb" style="left:308px;top:580px;background:#fff"></div>
<div class="abs td" style="left:340px;top:582px;width:191px">Test73 AS2 HTTPS async MDN</div>
<div class="abs td up" style="left:690px;top:582px;width:91px">FLATFILE</div>
<div class="abs" style="left:990px;top:586px;width:10px;height:10px;background:#5cb85c"></div>
<div class="abs td" style="left:1004px;top:582px">OK</div>
<div class="abs td dt" style="left:1090px;top:582px;width:191px">27.01.2022 17:01:16</div>
<div class="abs td" style="left:1290px;top:582px;width:91px">*AS2</div>
<div class="abs td b" style="left:1390px;top:582px;width:308px">MYFILENAME_112.TXT</div>
<div class="abs" style="left:302px;top:609px;width:1396px;height:36px;background:#f5f5f5"></div>
<div class="abs" style="left:302px;top:645px;width:1396px;height:1px;background:#e6e9ee"></div>
<div class="abs cb" style="left:308px;top:617px;background:#fff"></div>
<div class="abs td" style="left:340px;top:619px;width:191px">Test73 AS2 HTTPS async MDN</div>
<div class="abs td up" style="left:690px;top:619px;width:91px">FLATFILE</div>
<div class="abs" style="left:990px;top:623px;width:10px;height:10px;background:#5cb85c"></div>
<div class="abs td" style="left:1004px;top:619px">OK</div>
<div class="abs td dt" style="left:1090px;top:619px;width:191px">27.01.2022 17:01:16</div>
<div class="abs td" style="left:1290px;top:619px;width:91px">*AS2</div>
<div class="abs td b" style="left:1390px;top:619px;width:308px">NOT_REGISTERED_105.TXT</div>
<div class="abs" style="left:302px;top:646px;width:1396px;height:36px;background:#fff"></div>
<div class="abs" style="left:302px;top:682px;width:1396px;height:1px;background:#e6e9ee"></div>
<div class="abs cb" style="left:308px;top:654px;background:#fff"></div>
<div class="abs td" style="left:340px;top:656px;width:191px">Test73 AS2 HTTPS async MDN</div>
<div class="abs td up" style="left:690px;top:656px;width:91px">FLATFILE</div>
<div class="abs" style="left:990px;top:660px;width:10px;height:10px;background:#5cb85c"></div>
<div class="abs td" style="left:1004px;top:656px">OK</div>
<div class="abs td dt" style="left:1090px;top:656px;width:191px">27.01.2022 17:01:16</div>
<div class="abs td" style="left:1290px;top:656px;width:91px">*AS2</div>
<div class="abs td b" style="left:1390px;top:656px;width:308px">ORDERS_112.EDI</div>
<div class="abs" style="left:302px;top:683px;width:1396px;height:36px;background:#f5f5f5"></div>
<div class="abs" style="left:302px;top:719px;width:1396px;height:1px;background:#e6e9ee"></div>
<div class="abs cb" style="left:308px;top:691px;background:#fff"></div>
<div class="abs td" style="left:340px;top:693px;width:191px">Test73 AS2 HTTPS async MDN</div>
<div class="abs td up" style="left:690px;top:693px;width:91px">FLATFILE</div>
<div class="abs" style="left:990px;top:697px;width:10px;height:10px;background:#5cb85c"></div>
<div class="abs td" style="left:1004px;top:693px">OK</div>
<div class="abs td dt" style="left:1090px;top:693px;width:191px">27.01.2022 17:01:16</div>
<div class="abs td" style="left:1290px;top:693px;width:91px">*AS2</div>
<div class="abs td b" style="left:1390px;top:693px;width:308px">NO_PERMISSION_109.TXT</div>
<div class="abs" style="left:302px;top:720px;width:1396px;height:36px;background:#fff"></div>
<div class="abs" style="left:302px;top:756px;width:1396px;height:1px;background:#e6e9ee"></div>
<div class="abs cb" style="left:308px;top:728px;background:#fff"></div>
<div class="abs td" style="left:340px;top:730px;width:191px">Test73 AS2 HTTPS async MDN</div>
<div class="abs td up" style="left:690px;top:730px;width:91px">FLATFILE</div>
<div class="abs" style="left:990px;top:734px;width:10px;height:10px;background:#5cb85c"></div>
<div class="abs td" style="left:1004px;top:730px">OK</div>
<div class="abs td dt" style="left:1090px;top:730px;width:191px">27.01.2022 17:01:15</div>
<div class="abs td" style="left:1290px;top:730px;width:91px">*AS2</div>
<div class="abs td b" style="left:1390px;top:730px;width:308px">AS2-TEST_986.TXT</div>
<div class="abs" style="left:302px;top:757px;width:1396px;height:36px;background:#f5f5f5"></div>
<div class="abs cb" style="left:308px;top:765px;background:#fff"></div>
<div class="abs td" style="left:340px;top:767px;width:191px">Test73 AS2 HTTPS async MDN</div>
<div class="abs td up" style="left:690px;top:767px;width:91px">FLATFILE</div>
<div class="abs" style="left:990px;top:771px;width:10px;height:10px;background:#5cb85c"></div>
<div class="abs td" style="left:1004px;top:767px">OK</div>
<div class="abs td dt" style="left:1090px;top:767px;width:191px">27.01.2022 17:01:15</div>
<div class="abs td" style="left:1290px;top:767px;width:91px">*AS2</div>
<div class="abs td b" style="left:1390px;top:767px;width:308px">AS2-TEST_985.TXT</div>
<div class="abs" style="left:331px;top:239px;width:1px;height:554px;background:#e6e9ee"></div>
<div class="abs" style="left:531px;top:239px;width:1px;height:554px;background:#e6e9ee"></div>
<div class="abs" style="left:681px;top:239px;width:1px;height:554px;background:#e6e9ee"></div>
<div class="abs" style="left:781px;top:239px;width:1px;height:554px;background:#e6e9ee"></div>
<div class="abs" style="left:981px;top:239px;width:1px;height:554px;background:#e6e9ee"></div>
<div class="abs" style="left:1081px;top:239px;width:1px;height:554px;background:#e6e9ee"></div>
<div class="abs" style="left:1281px;top:239px;width:1px;height:554px;background:#e6e9ee"></div>
<div class="abs" style="left:1381px;top:239px;width:1px;height:554px;background:#e6e9ee"></div>
<div class="abs" style="left:302px;top:793px;width:1396px;height:17px;background:#f1f1f1"></div>
<div class="abs" style="left:319px;top:793px;width:1360px;height:17px;background:#cdcdcd"></div>
<svg class="abs" style="left:305px;top:796px" width="10" height="12" viewBox="0 0 10 12"><path fill="none" stroke="#555" stroke-width="2" d="M7,1.5 L3,5.8 L7,10.1"/></svg>
<svg class="abs" style="left:1684px;top:796px" width="10" height="12" viewBox="0 0 10 12"><path fill="none" stroke="#555" stroke-width="2" d="M3,1.5 L7,5.8 L3,10.1"/></svg>
<div class="abs" id="fbar"></div>
<div class="abs" id="foot"></div>

<!-- pagers -->
<div class="abs" style="left:1338px;top:158px;width:272px;height:34px;background:#fff;border:1px solid #dddddd"></div>
<svg class="abs" style="left:1353px;top:170px" width="8" height="11" viewBox="0 0 8 11"><path fill="none" stroke="#666" stroke-width="1.3" d="M5.5,1.5 L2,5.5 L5.5,9.5"/></svg>
<div class="abs" style="left:1377px;top:158px;width:30px;height:34px;background:#f39c00"></div>
<div class="abs pg" style="left:1377px;top:167px;width:30px;color:#fff">1</div>
<div class="abs pg" style="left:1407px;top:167px;width:29px;color:#555">2</div>
<div class="abs" style="left:1436px;top:158px;width:1px;height:34px;background:#dddddd"></div>
<div class="abs pg" style="left:1436px;top:167px;width:28px;color:#555">3</div>
<div class="abs" style="left:1464px;top:158px;width:1px;height:34px;background:#dddddd"></div>
<div class="abs pg" style="left:1464px;top:167px;width:29px;color:#555">4</div>
<div class="abs" style="left:1493px;top:158px;width:1px;height:34px;background:#dddddd"></div>
<div class="abs pg" style="left:1493px;top:167px;width:32px;color:#555">...</div>
<div class="abs" style="left:1525px;top:158px;width:1px;height:34px;background:#dddddd"></div>
<div class="abs pg" style="left:1525px;top:167px;width:45px;color:#555">220</div>
<div class="abs" style="left:1570px;top:158px;width:1px;height:34px;background:#dddddd"></div>
<svg class="abs" style="left:1585px;top:170px" width="8" height="11" viewBox="0 0 8 11"><path fill="none" stroke="#444" stroke-width="1.3" d="M2.5,1.5 L6,5.5 L2.5,9.5"/></svg>
<div class="abs" style="left:1619px;top:158px;width:80px;height:34px;background:#fff;border:1px solid #c6ccd8"></div>
<div class="abs pg" style="left:1635px;top:167px;text-align:left;color:#555">15</div>
<svg class="abs" style="left:1683px;top:172px" width="12" height="8" viewBox="0 0 12 8"><path fill="none" stroke="#444" stroke-width="1.6" d="M1.5,1.5 L6,6 L10.5,1.5"/></svg>
<div class="abs" style="left:301px;top:823px;font-weight:700;font-size:14.3px;line-height:18px;color:#333;white-space:nowrap">3286 Einträge gesamt, von 0 bis 15 angezeigt</div>
<svg class="abs" style="left:1376px;top:816px" width="29" height="29" viewBox="0 0 29 29">
<circle cx="14.4" cy="14.7" r="12.3" fill="none" stroke="#777" stroke-width="1.9"/>
<path fill="none" stroke="#777" stroke-width="1.9" d="M14.4,22 V7.5 M8.8,13 L14.4,7.4 L20,13"/>
</svg>
<div class="abs" style="left:1428px;top:813px;width:271px;height:34px;background:#fff;border:1px solid #dddddd"></div>
<svg class="abs" style="left:1443px;top:825px" width="8" height="11" viewBox="0 0 8 11"><path fill="none" stroke="#666" stroke-width="1.3" d="M5.5,1.5 L2,5.5 L5.5,9.5"/></svg>
<div class="abs" style="left:1467px;top:813px;width:30px;height:34px;background:#f39c00"></div>
<div class="abs pg" style="left:1467px;top:822px;width:30px;color:#fff">1</div>
<div class="abs pg" style="left:1497px;top:822px;width:29px;color:#555">2</div>
<div class="abs" style="left:1526px;top:813px;width:1px;height:34px;background:#dddddd"></div>
<div class="abs pg" style="left:1526px;top:822px;width:28px;color:#555">3</div>
<div class="abs" style="left:1554px;top:813px;width:1px;height:34px;background:#dddddd"></div>
<div class="abs pg" style="left:1554px;top:822px;width:29px;color:#555">4</div>
<div class="abs" style="left:1583px;top:813px;width:1px;height:34px;background:#dddddd"></div>
<div class="abs pg" style="left:1583px;top:822px;width:32px;color:#555">...</div>
<div class="abs" style="left:1615px;top:813px;width:1px;height:34px;background:#dddddd"></div>
<div class="abs pg" style="left:1615px;top:822px;width:45px;color:#555">220</div>
<div class="abs" style="left:1660px;top:813px;width:1px;height:34px;background:#dddddd"></div>
<svg class="abs" style="left:1675px;top:825px" width="8" height="11" viewBox="0 0 8 11"><path fill="none" stroke="#444" stroke-width="1.3" d="M2.5,1.5 L6,5.5 L2.5,9.5"/></svg>
<div class="abs ft" style="left:20.8px">i-effect</div>
<div class="abs" style="left:63.5px;top:1233px;font-size:9px;line-height:10px;color:#fff">&#174;</div>
<div class="abs ft" style="left:73.6px;letter-spacing:0.3px">WebControl</div>
<div class="abs ft" style="left:778.8px">Tabelle: VORGANGV4</div>
<div class="abs ft" style="left:913.7px">::</div>
<div class="abs ft" style="left:927.7px">Datenbankbibliothek: IEFFECTDB</div>
<div class="abs ft" style="left:1132.4px">::</div>
<div class="abs ft" style="left:1146.2px">i-effect: V2R9M0</div>
<div class="abs ft" style="left:1251.2px">::</div>
<div class="abs ft" style="left:1265.2px">System: test74:443</div>
<div class="abs ft" style="left:1386.0px">::</div>
<div class="abs ft" style="left:1399.0px">Seriennummer: 7810FB0</div>
<div class="abs ft" style="left:1557.2px">::</div>
<div class="abs ft" style="left:1570.2px">Partition: 15 (TEST74)</div>
<div class="abs" id="frameT"></div>
<div class="abs" id="frameL"></div>
<div class="abs" id="frameR"></div>
<div class="abs" id="frameB"></div>
</body></html>
